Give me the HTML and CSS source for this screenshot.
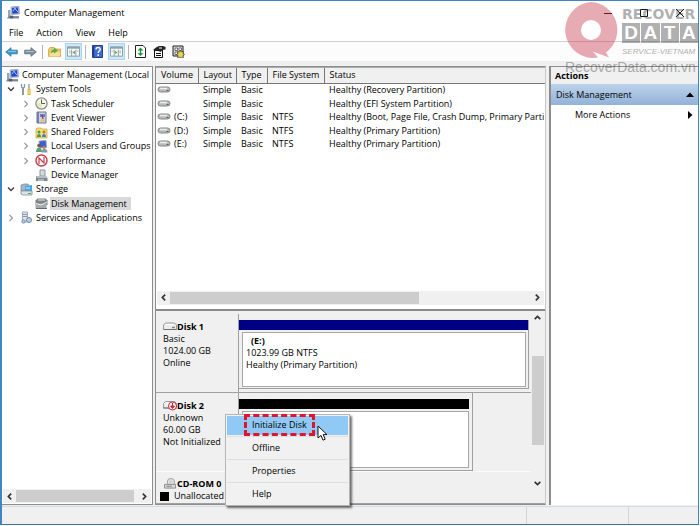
FILE: index.html
```html
<!DOCTYPE html>
<html lang="en">
<head>
<meta charset="utf-8">
<title>Computer Management</title>
<link rel="stylesheet" href="styles.css">
</head>
<body>
<svg class="defs" aria-hidden="true">
  <symbol id="computer" viewBox="0 0 13 13">
    <path d="M4 1l8-1 .5 8-8 .5z" fill="#b9c6dc" stroke="#8290b0" stroke-width=".6"/>
    <path d="M5 2l6-.7.4 6-6 .4z" fill="#2448c8"/>
    <path d="M6 5l2-3 1 2 2 2" stroke="#9cc3ff" fill="none"/>
    <path d="M1 4h2.500v6H1z" fill="#98a4b4"/><path d="M1 10h11v2H1z" fill="#8b98a8"/>
    <path d="M0 12h12M3 10h3v2H3z" stroke="#56657a" fill="#4d5c72" stroke-width=".7"/>
  </symbol>
  <symbol id="tools" viewBox="0 0 13 13">
    <path d="M3 5v7" stroke="#8d99a8" stroke-width="2"/>
    <path d="M1.500 1v3L3 5.500 4.500 4V1" fill="none" stroke="#8d99a8" stroke-width="1.300"/>
    <path d="M9 1v5" stroke="#9aa0b0" stroke-width="1.500"/><path d="M9 6v6" stroke="#e3b724" stroke-width="3"/>
    <path d="M9 7v4" stroke="#fbe88b"/>
  </symbol>
  <symbol id="clock" viewBox="0 0 13 13">
    <circle cx="6.500" cy="6.500" r="5.600" fill="#f6f5dc" stroke="#8b8b94" stroke-width="1.300"/>
    <path d="M6.500 6.500V11A4.500 4.500 0 0 1 2 6.500z" fill="#dfe6b8"/><path d="M6.500 2.500v4h3.500" fill="none" stroke="#55606c"/>
  </symbol>
  <symbol id="event" viewBox="0 0 13 13">
    <path d="M2 1h9v11H2z" fill="#c9d3ea" stroke="#6a7396"/><path d="M2 1h2v11H2z" fill="#777da0"/>
    <path d="M5 3h5v3H5z" fill="#5b86cf"/><path d="M7 4l1 4" stroke="#d02c2c" stroke-width="1.300"/><path d="M5.500 8.500h4v2h-4z" fill="#e2c44f"/>
  </symbol>
  <symbol id="shared" viewBox="0 0 13 13">
    <path d="M1 3l1-1h4l1 1h5v9H1z" fill="#f3df7a" stroke="#c4ac45" stroke-width=".8"/>
    <circle cx="4" cy="6" r="1.500" fill="#4a9653"/><path d="M2 11c0-4 4-4 4 0z" fill="#4a9653"/>
    <circle cx="9" cy="6" r="1.500" fill="#c4762e"/><path d="M7 11c0-4 4-4 4 0z" fill="#4a79c4"/>
  </symbol>
  <symbol id="users" viewBox="0 0 13 13">
    <path d="M4 1l7-.5.5 7-7 .5z" fill="#3e5ed0" stroke="#9aa7c6"/><circle cx="4" cy="5.500" r="1.800" fill="#7b5a39"/>
    <path d="M1 12c0-6 6-6 6 0z" fill="#5aa268"/><circle cx="9" cy="7.500" r="1.500" fill="#b88b5a"/><path d="M6.500 12.500c0-5 6-5 6 0z" fill="#8796ad"/>
  </symbol>
  <symbol id="performance" viewBox="0 0 13 13">
    <circle cx="6.500" cy="6.500" r="5.500" fill="#fff" stroke="#c7394a" stroke-width="1.400"/>
    <path d="M4 10V4l5 5V3" fill="none" stroke="#bb4152" stroke-width="1.200"/>
  </symbol>
  <symbol id="device" viewBox="0 0 13 13">
    <path d="M5 1h5v6H5z" fill="#d5dade" stroke="#8b949c"/><path d="M1 7h10l1.500 2v3H1z" fill="#7c868e"/>
    <path d="M1 7h10l1.500 2H2z" fill="#b7bec4"/><path d="M3 11h6" stroke="#dfe3e6"/>
  </symbol>
  <symbol id="storage" viewBox="0 0 13 13">
    <path d="M1 2l3-1h4l1 2v5H1z" fill="#a9b5c1" stroke="#75828f" stroke-width=".7"/><path d="M5 3l7-1v6H5z" fill="#49a6e4"/>
    <path d="M6 5h4" stroke="#d6f0ff"/><path d="M1 8h11v4H3L1 11z" fill="#dfe3e6" stroke="#848f9a" stroke-width=".8"/><path d="M8 10.500h3" stroke="#4bb05c"/>
  </symbol>
  <symbol id="diskmgmt" viewBox="0 0 13 13">
    <path d="M.5 3.500l2-2h8l2 2V8H.5z" fill="#7d8488"/><path d="M3 3h7" stroke="#e5e8e9"/><path d="M.5 6.500h11v5H.5z" fill="#a5abae"/>
    <path d="M1 6.500l5 1.500 6-3" stroke="#f0f2f3" fill="none"/><path d="M1 11.500h11" stroke="#676e72"/>
  </symbol>
  <symbol id="services" viewBox="0 0 13 13">
    <path d="M2.500 1h5v10h-5z" fill="#dce3ea" stroke="#8a98a8" stroke-width=".8"/><path d="M3 3.500h4M3 5.500h4" stroke="#8a98a8"/>
    <circle cx="9" cy="9" r="2.500" fill="#b9d0e6" stroke="#6c8eb0"/><circle cx="3.500" cy="10.500" r="1.600" fill="#b9d0e6" stroke="#6c8eb0"/>
  </symbol>
  <symbol id="volume" viewBox="0 0 13 7">
    <rect x=".5" y="1" width="12" height="5" rx="2.500" fill="#b9bbbb" stroke="#858787"/>
    <path d="M2.500 2.500h7" stroke="#ededed" stroke-width="1.500"/><path d="M9 4.500h2" stroke="#5e6161"/>
  </symbol>
  <symbol id="drive" viewBox="0 0 14 9">
    <path d="M.5 3l2-2h9l2 2v4.500H.5z" fill="#ececec" stroke="#909090" stroke-width=".9"/><path d="M.5 7.500h13" stroke="#6f6f6f"/>
    <path d="M9 5.500h3" stroke="#858585" stroke-width="1.500"/><path d="M2.500 2.500h8" stroke="#fff"/>
  </symbol>
  <symbol id="open" viewBox="0 0 8 8"><path d="M1 2.500l3 3 3-3" fill="none" stroke="#3c3c3c" stroke-width="1.300"/></symbol>
  <symbol id="shut" viewBox="0 0 8 8"><path d="M2.500 1l3 3-3 3" fill="none" stroke="#9b9b9b" stroke-width="1.200"/></symbol>
  <symbol id="left" viewBox="0 0 8 8"><path d="M5.500 1.500L3 4l2.500 2.500" fill="none" stroke="#333" stroke-width="1.500"/></symbol>
  <symbol id="right" viewBox="0 0 8 8"><path d="M2.500 1.500L5 4 2.500 6.500" fill="none" stroke="#333" stroke-width="1.500"/></symbol>
  <symbol id="up" viewBox="0 0 8 8"><path d="M1.500 5.500L4 3l2.500 2.500" fill="none" stroke="#333" stroke-width="1.500"/></symbol>
  <symbol id="down" viewBox="0 0 8 8"><path d="M1.500 2.500L4 5l2.500-2.500" fill="none" stroke="#333" stroke-width="1.500"/></symbol>
  <symbol id="arrow" viewBox="0 0 13 10"><path d="M.7 5L6 .7v2.500h6.300v3.600H6v2.500z" fill="currentColor" stroke="#48718f" stroke-width=".8"/><path d="M3 4.500h8" stroke="#fff" opacity=".4"/></symbol>
  <symbol id="pane" viewBox="0 0 14 12"><path d="M.5 1h13v10H.5z" fill="#f8fbf9" stroke="#8b989d"/><path d="M1 2h12" stroke="#8ba1b0" stroke-width="2"/><path d="M5 4v7M9.500 4v7" stroke="#8b989d"/><path d="M2 5.500h2M2 7.500h2M10.500 5.500h2" stroke="#a0adb5"/><path d="M8.500 5v4L6 7z" fill="#4da755"/></symbol>
</svg>

<div class="window">
  <header class="titlebar">
    <svg class="icon"><use href="#computer"/></svg>
    <h1>Computer Management</h1>
    <div class="controls">
      <button aria-label="Minimize"><svg viewBox="0 0 10 10"><path d="M1 5.500h8" stroke="#111"/></svg></button>
      <button aria-label="Maximize"><svg viewBox="0 0 10 10"><path d="M1.500 1.500h7v7h-7z" fill="none" stroke="#111"/></svg></button>
      <button aria-label="Close"><svg viewBox="0 0 10 10"><path d="M1 1l8 8M9 1L1 9" stroke="#111"/></svg></button>
    </div>
  </header>
  <nav class="menubar">
    <button>File</button><button>Action</button><button>View</button><button>Help</button>
  </nav>
  <div class="toolbar">
    <button class="back" aria-label="Back"><svg><use href="#arrow"/></svg></button>
    <button class="forward" aria-label="Forward"><svg><use href="#arrow"/></svg></button>
    <i class="sep"></i>
    <button aria-label="Up one level"><svg viewBox="0 0 13 12"><path d="M.5 4l1.500-2h4l1 1.500h5.500V11H.5z" fill="#edcc69" stroke="#caa548" stroke-width=".8"/><path d="M1 11l2-4h9.500l-1 4z" fill="#f7e19a"/><path d="M3 8c0-3 1-4 3-4V2l4 3-4 3V6.500C4.500 6.500 4 7 3 8z" fill="#58ad4b"/></svg></button>
    <button class="on" aria-label="Show console tree"><svg viewBox="0 0 14 12"><use href="#pane"/></svg></button>
    <i class="sep"></i>
    <button aria-label="Help topics"><svg viewBox="0 0 12 13"><path d="M1 .5h10v12H1z" fill="#3f6ed3" stroke="#253f90"/><path d="M2 1v11" stroke="#243b88" stroke-width="1.500"/><path d="M4.500 4.500c0-3 4.500-2.500 4.200 0C8.500 6 6.700 6 6.700 8M6.700 9.300V11" fill="none" stroke="#fff" stroke-width="1.400"/></svg></button>
    <button class="on" aria-label="Show action pane"><svg viewBox="0 0 14 12"><g transform="matrix(-1 0 0 1 14 0)"><use href="#pane"/></g></svg></button>
    <i class="sep"></i>
    <button aria-label="Refresh"><svg viewBox="0 0 12 13"><path d="M1 .5h7.500L11 3v9.500H1z" fill="#fff" stroke="#222"/><path d="M6 5v4" stroke="#239138" stroke-width="1.400"/><path d="M3 5.500L6 2.500l3 3zM3 8.200h6L6 11z" fill="#239138"/></svg></button>
    <button aria-label="Properties"><svg viewBox="0 0 13 13"><path d="M1.500 5h8v7.500h-8z" fill="#fff" stroke="#111"/><path d="M3 8.500h5M3 10.500h5" stroke="#111"/><path d="M.5 4.500L3 2.500 6 1h4l2.500 1v2.500L9 5 8 7 5 6H1z" fill="#222"/><path d="M6 3h3" stroke="#fff"/></svg></button>
    <button aria-label="Settings"><svg viewBox="0 0 13 13"><path d="M1 1h10v10H1z" fill="#d9dbd7" stroke="#222"/><path d="M3 3h2.500v2.500H3zM7 3h2.500v2.500H7zM3 7h2.500v2.500H3z" fill="#fff" stroke="#555" stroke-width=".8"/><path d="M8.500 5.500l1 1.500 2-.5-.5 2 1.500 1-1.500 1 .5 2-2-.5-1 1-1-1-2 .5.500-2-1.500-1 1.500-1L5.500 6.500l2 .5z" fill="#e5d84a" stroke="#333" stroke-width=".7"/></svg></button>
  </div>

  <main class="panes">
    <aside class="tree">
      <ul>
        <li class="root"><svg class="icon"><use href="#computer"/></svg><span>Computer Management (Local</span></li>
        <li><svg class="twist"><use href="#open"/></svg><svg class="icon"><use href="#tools"/></svg><span>System Tools</span></li>
        <li class="child"><svg class="twist"><use href="#shut"/></svg><svg class="icon"><use href="#clock"/></svg><span>Task Scheduler</span></li>
        <li class="child"><svg class="twist"><use href="#shut"/></svg><svg class="icon"><use href="#event"/></svg><span>Event Viewer</span></li>
        <li class="child"><svg class="twist"><use href="#shut"/></svg><svg class="icon"><use href="#shared"/></svg><span>Shared Folders</span></li>
        <li class="child"><svg class="twist"><use href="#shut"/></svg><svg class="icon"><use href="#users"/></svg><span>Local Users and Groups</span></li>
        <li class="child"><svg class="twist"><use href="#shut"/></svg><svg class="icon"><use href="#performance"/></svg><span>Performance</span></li>
        <li class="child"><i class="twist"></i><svg class="icon"><use href="#device"/></svg><span>Device Manager</span></li>
        <li><svg class="twist"><use href="#open"/></svg><svg class="icon"><use href="#storage"/></svg><span>Storage</span></li>
        <li class="child"><i class="twist"></i><svg class="icon"><use href="#diskmgmt"/></svg><span class="selected">Disk Management</span></li>
        <li><svg class="twist"><use href="#shut"/></svg><svg class="icon"><use href="#services"/></svg><span>Services and Applications</span></li>
      </ul>
      <div class="hscroll"><svg><use href="#left"/></svg><div class="track"><i class="thumb"></i></div><svg><use href="#right"/></svg></div>
    </aside>

    <section class="center">
      <div class="volumes">
        <table>
          <colgroup><col class="c-volume"><col class="c-layout"><col class="c-type"><col class="c-fs"><col></colgroup>
          <thead><tr><th>Volume</th><th>Layout</th><th>Type</th><th>File System</th><th>Status</th></tr></thead>
          <tbody>
            <tr><td><svg class="vol"><use href="#volume"/></svg></td><td>Simple</td><td>Basic</td><td></td><td>Healthy (Recovery Partition)</td></tr>
            <tr><td><svg class="vol"><use href="#volume"/></svg></td><td>Simple</td><td>Basic</td><td></td><td>Healthy (EFI System Partition)</td></tr>
            <tr><td><svg class="vol"><use href="#volume"/></svg>(C:)</td><td>Simple</td><td>Basic</td><td>NTFS</td><td>Healthy (Boot, Page File, Crash Dump, Primary Parti</td></tr>
            <tr><td><svg class="vol"><use href="#volume"/></svg>(D:)</td><td>Simple</td><td>Basic</td><td>NTFS</td><td>Healthy (Primary Partition)</td></tr>
            <tr><td><svg class="vol"><use href="#volume"/></svg>(E:)</td><td>Simple</td><td>Basic</td><td>NTFS</td><td>Healthy (Primary Partition)</td></tr>
          </tbody>
        </table>
        <div class="hscroll"><svg><use href="#left"/></svg><div class="track"><i class="thumb wide"></i></div><svg><use href="#right"/></svg></div>
      </div>

      <div class="graph">
        <div class="disks">
          <div class="rows">
            <article class="disk">
              <div class="label"><h2><svg><use href="#drive"/></svg>Disk 1</h2><p>Basic</p><p>1024.00 GB</p><p>Online</p></div>
              <div class="part"><div class="bar navy"></div><div class="body"><strong>(E:)</strong><p>1023.99 GB NTFS</p><p>Healthy (Primary Partition)</p></div></div>
            </article>
            <article class="disk">
              <div class="label"><h2><svg viewBox="0 0 14 10"><use href="#drive" width="14" height="9"/><circle cx="9.500" cy="5.500" r="4" fill="#fff" stroke="#c62839"/><path d="M9.500 2.500v4M7.500 5.500l2 2.500 2-2.500z" stroke="#c62839" fill="#c62839"/></svg>Disk 2</h2><p>Unknown</p><p>60.00 GB</p><p>Not Initialized</p></div>
              <div class="part small"><div class="bar"></div><div class="body"></div></div>
            </article>
            <article class="disk cd">
              <div class="label"><h2><svg viewBox="0 0 14 12"><circle cx="8" cy="4.500" r="4" fill="#e4e4e4" stroke="#999"/><circle cx="8" cy="4.500" r="1.200" fill="#fff" stroke="#999" stroke-width=".6"/><path d="M1 7h12v4H1z" fill="#ddd" stroke="#888"/><path d="M3 9h6" stroke="#777"/></svg>CD-ROM 0</h2></div>
            </article>
          </div>
          <div class="vscroll"><svg><use href="#up"/></svg><div class="track"><i class="thumb"></i></div><svg><use href="#down"/></svg></div>
        </div>
        <footer class="legend"><i></i>Unallocated</footer>
      </div>
    </section>

    <aside class="actions">
      <h2>Actions</h2>
      <button class="group">Disk Management<svg viewBox="0 0 8 8"><path d="M0 6l4-4.500L8 6z"/></svg></button>
      <button class="more">More Actions<svg viewBox="0 0 8 8"><path d="M2 0l4.500 4L2 8z"/></svg></button>
    </aside>
  </main>
  <footer class="status"><span></span><span></span><span></span></footer>
</div>

<div class="context" role="menu">
  <button class="active" role="menuitem"><span>Initialize Disk</span></button>
  <button role="menuitem">Offline</button>
  <button role="menuitem">Properties</button>
  <button role="menuitem">Help</button>
</div>
<svg class="cursor" viewBox="0 0 11 17"><path d="M1 1v12l3-2.600 2 4.800 2.200-1-2-4.600H10z" fill="#fff" stroke="#111"/></svg>

<div class="watermark">
  <svg viewBox="0 0 58 58"><path fill-rule="evenodd" d="M29 1a28 28 0 1 0 7 55.500l-5-6 16 6-3-5A28 28 0 0 0 29 1zm0 18a10 10 0 1 1 0 20 10 10 0 0 1 0-20z" fill="#c8384f"/></svg>
  <div class="brand"><b>RECOVER</b><div class="tiles"><span>D</span><span>A</span><span>T</span><span>A</span></div><em>SERVICE-VIETNAM</em></div>
  <div class="site">RecoverData.com.vn</div>
</div>
</body>
</html>
```
FILE: styles.css
```css
* { box-sizing: border-box; margin: 0; padding: 0; }
html, body { height: 100%; }
body { position: relative; background: #f3fbff; color: #000; font: 9px/12px "Open Sans", "Noto Sans", sans-serif; overflow: hidden; }
button { border: 0; background: none; font: inherit; color: inherit; }
svg { display: block; flex: none; }
.defs { position: absolute; width: 0; height: 0; }
ul { list-style: none; }
.icon { width: 13px; height: 13px; }

.window { display: flex; flex-direction: column; height: calc(100vh - 1px); margin-right: 1px; border: 1px solid #3f86c0; border-left-width: 2px; border-bottom-color: #44748e; background: #f0f0f0; }
.titlebar { display: flex; align-items: center; height: 23px; padding-left: 5px; gap: 4px; background: #fff; }
.titlebar h1 { font-size: 9px; font-weight: 400; }
.controls { display: flex; margin-left: auto; }
.controls button { display: grid; place-items: center; width: 36px; height: 22px; }
.controls svg { width: 10px; height: 10px; }
.menubar { display: flex; gap: 13px; height: 18px; padding-left: 7px; background: #fff; border-bottom: 1px solid #cfcfcf; }
.toolbar { display: flex; align-items: center; gap: 2px; height: 20px; padding-left: 1px; background: #fcfcfc; border-bottom: 1px solid #ececec; }
.toolbar button { display: grid; place-items: center; width: 17px; height: 17px; }
.toolbar svg { width: 13px; height: 13px; }
.toolbar .back svg, .toolbar .forward svg { height: 10px; }
.back { color: #2ba0dc; }
.forward { color: #8b8f92; }
.forward svg { transform: scaleX(-1); }
.toolbar .on { background: #cce8fa; border: 1px solid #a8d4f2; }
.sep { width: 1px; height: 14px; margin: 0 1px; background: #b4b4b4; }

.panes { display: grid; grid-template-columns: 151px 1fr 150px; gap: 2px; flex: 1; min-height: 0; padding-top: 4px; }
.tree { display: flex; flex-direction: column; min-width: 0; background: #fff; border: 1px solid #8d8d8d; border-left: 0; }
.tree ul { display: grid; grid-auto-rows: 1fr; height: 158px; padding-top: 1px; overflow: hidden; }
.tree li { display: flex; align-items: center; gap: 2px; padding-left: 5px; white-space: nowrap; }
.tree li.root { padding-left: 4px; }
.tree li.child { padding-left: 20px; }
.tree .twist { width: 8px; height: 8px; margin-right: 3px; flex: none; }
.tree span { padding: 0 1px; }
.tree .selected { background: #d9d9d9; padding: 0 4px 0 1px; line-height: 13px; }
.hscroll { display: flex; align-items: center; height: 14px; margin: auto 1px 1px; padding: 0 2px; background: #f0f0f0; }
.hscroll svg, .vscroll svg { width: 9px; height: 9px; }
.hscroll .track { flex: 1; height: 12px; padding: 0 2px; }
.thumb { display: block; height: 100%; width: 97%; background: #cdcdcd; }
.thumb.wide { width: 69%; }

.center { display: flex; flex-direction: column; min-width: 0; border: 1px solid #8d8d8d; border-right-color: #c8c8c8; }
.volumes { display: flex; flex-direction: column; flex: 243 1 0; min-height: 0; background: #fff; border-top: 1px solid #aaa; border-bottom: 2px solid #8a8a8a; }
.volumes .hscroll { margin-bottom: 4px; }
table { width: 100%; height: 83px; table-layout: fixed; border-collapse: collapse; }
th, td { padding: 0 0 0 5px; text-align: left; font-weight: 400; white-space: nowrap; overflow: hidden; line-height: 12px; }
th { height: 15px; background: #f0f0f0; border-right: 1px solid #777; border-bottom: 1px solid #777; }
th:last-child { border-right: 0; }
td:first-child { padding-left: 1px; }
.c-volume { width: 42px; } .c-layout { width: 38px; } .c-type { width: 31px; } .c-fs { width: 57px; }
.vol { display: inline-block; width: 14px; height: 7px; margin-right: 3px; }

.graph { display: flex; flex-direction: column; flex: 194 1 0; min-height: 0; padding-top: 1px; }
.disks { display: flex; flex: 1; min-height: 0; }
.rows { flex: 1; min-width: 0; overflow: hidden; padding-top: 2px; }
.disk { display: flex; height: 79px; border-bottom: 1px solid #a0a0a0; }
.disk + .disk { border-bottom-color: #fcfcfc; }
.label { width: 83px; padding: 7px 0 0 7px; border-right: 1px solid #a0a0a0; white-space: nowrap; }
.label h2 { display: flex; align-items: center; font-size: 9px; line-height: 12px; font-weight: 700; }
.label h2 svg { width: 14px; height: 11px; }
.part { flex: 1; display: flex; flex-direction: column; margin: 6px 2px 3px 0; border-right: 1px solid #a0a0a0; border-bottom: 1px solid #a0a0a0; }
.part.small { flex: none; width: 234px; margin: 0; padding: 6px 3px 0 0; }
.bar { height: 10px; background: #000; }
.bar.navy { background: #000084; }
.body { flex: 1; margin: 2px 2px 1px 3px; padding: 2px 0 0 3px; background: #fff; border: 1px solid #a8a8a8; }
.small .body { margin: 2px 0 2px 3px; }
.body strong { margin-left: 5px; }
.cd .label { border-right: 0; padding-top: 6px; }
.vscroll { display: flex; flex-direction: column; align-items: center; width: 13px; margin-right: 1px; padding: 1px 0; background: #f0f0f0; }
.vscroll .track { flex: 1; width: 12px; padding: 34px 0; }
.vscroll .thumb { width: 100%; }
.legend { display: flex; align-items: center; gap: 5px; height: 15px; padding-left: 4px; border-bottom: 1px solid #a0a0a0; }
.legend i { width: 9px; height: 9px; background: #000; }

.actions { background: #fff; border-left: 2px solid #8d8d8d; border-top: 1px solid #8d8d8d; margin-left: 1px; }
.actions h2 { height: 17px; padding: 2px 0 0 4px; background: #f0f0f0; font-size: 9px; line-height: 14px; }
.actions button { display: flex; align-items: center; justify-content: space-between; width: 100%; height: 19px; padding: 0 4px 0 5px; }
.actions svg { width: 8px; height: 8px; }
.actions .group { height: 21px; background: linear-gradient(#bdd2ea, #92b2d8); }
.actions .more { padding-left: 24px; }
.status { display: flex; height: 18px; margin-top: 1px; border-top: 1px solid #d5dbe0; }
.status span { flex: 523; border-right: 1px solid #d5d5d5; }
.status span + span { flex: 101; }
.status span:last-child { flex: 69; border: 0; }

.context { position: absolute; left: 225px; top: 414px; width: 125px; display: flex; flex-direction: column; padding: 1px; background: #f1f1f1; border: 1px solid #b5b5b5; box-shadow: 2px 2px 2px rgba(0, 0, 0, .55); }
.context button { height: 23px; padding-left: 25px; text-align: left; border-top: 1px solid #dedede; }
.context button.active { height: 19px; padding-left: 17px; margin-bottom: 1px; background: #90c8f6; border-top: 0; }
.context button:last-child { height: 22px; }
.active span { display: flex; align-items: center; width: 71px; height: 22px; padding-left: 5px; border: 3px dashed #e0142c; white-space: nowrap; margin-top: -2px; }
.cursor { position: absolute; left: 317px; top: 425px; width: 11px; height: 17px; }

.watermark { position: absolute; right: 2px; top: 1px; display: grid; grid-template-columns: 60px 76px; grid-template-rows: 58px 18px; opacity: .42; pointer-events: none; color: #444; }
.watermark svg { width: 58px; height: 58px; }
.brand { padding: 5px 0 0; }
.brand b { display: block; font: 700 14px/16px "DejaVu Sans", sans-serif; }
.tiles { display: flex; gap: 1px; margin: 1px 0 3px; }
.tiles span { flex: 1 1 0; height: 20px; background: #444; color: #fff; font: 700 19px/20px "Liberation Sans", sans-serif; text-align: center; }
.brand em { display: block; font: italic 8px/11px "Liberation Sans", sans-serif; white-space: nowrap; }
.site { grid-column: 1 / 3; padding-left: 3px; font: 14px/16px "Liberation Sans", sans-serif; }
```
